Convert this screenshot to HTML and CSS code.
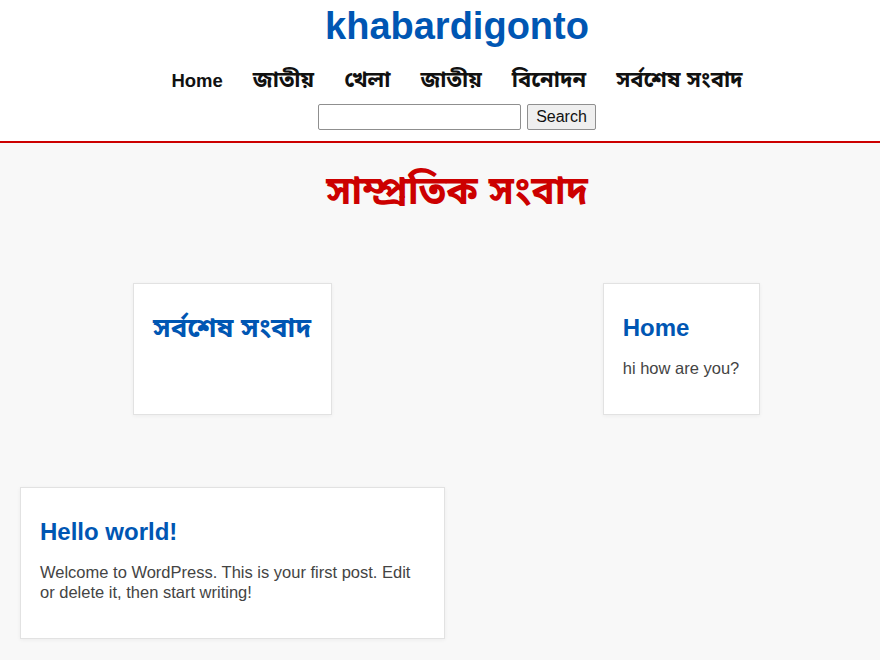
FILE: index.html
```html
<!DOCTYPE html>
<html lang="bn">
<head>
<meta charset="utf-8">
<title>khabardigonto</title>
<link rel="stylesheet" href="styles.css">
</head>
<body>
<div class="site">
  <header class="site-header">
    <h1 class="site-title">khabardigonto</h1>
    <nav class="main-nav">
      <ul class="nav-list">
        <li><a href="#" class="nav-en">Home</a></li>
        <li><a href="#">জাতীয়</a></li>
        <li><a href="#">খেলা</a></li>
        <li><a href="#">জাতীয়</a></li>
        <li><a href="#">বিনোদন</a></li>
        <li><a href="#">সর্বশেষ সংবাদ</a></li>
      </ul>
    </nav>
    <form class="search-form">
      <input type="text" class="search-input">
      <button type="button" class="search-button">Search</button>
    </form>
  </header>
  <main class="content">
    <h2 class="section-title">সাম্প্রতিক সংবাদ</h2>
    <div class="posts">
      <article class="card card-center">
        <h3 class="card-title bn">সর্বশেষ সংবাদ</h3>
      </article>
      <article class="card card-center">
        <h3 class="card-title">Home</h3>
        <p class="card-text">hi how are you?</p>
      </article>
      <article class="card">
        <h3 class="card-title">Hello world!</h3>
        <p class="card-text">Welcome to WordPress. This is your first post. Edit or delete it, then start writing!</p>
      </article>
    </div>
  </main>
</div>
</body>
</html>
```
FILE: styles.css
```css
html {
  overflow: hidden;
}
body {
  margin: 0;
  font-family: "Liberation Sans", Arial, "Noto Sans Bengali", "Lohit Bengali", sans-serif;
  background: #f8f8f8;
}
.site {
  width: 914px;
}
.site-header {
  background: #fff;
  text-align: center;
  padding: 4px 0 11px;
  border-bottom: 2px solid #cc0000;
}
.site-title {
  margin: 0;
  font-size: 38px;
  line-height: 44px;
  color: #0056b3;
  font-weight: bold;
}
.nav-list {
  list-style: none;
  margin: 17px 0 7px;
  padding: 0;
  display: flex;
  justify-content: center;
  align-items: baseline;
}
.nav-list li {
  margin: 0 15px;
  line-height: 30px;
}
.nav-list a {
  color: #111;
  text-decoration: none;
  font-size: 22px;
  font-weight: bold;
}
.nav-list a.nav-en {
  font-size: 18.5px;
}
.search-form {
  display: flex;
  justify-content: center;
  gap: 6px;
}
.search-input {
  width: 203px;
  height: 26px;
  box-sizing: border-box;
  border: 1px solid #8f8f8f;
  border-radius: 2px;
  padding: 3px 4px;
  font-size: 16px;
  background: #fff;
}
.search-button {
  height: 26px;
  box-sizing: border-box;
  border: 1px solid #8f8f8f;
  border-radius: 2px;
  background: #efefef;
  padding: 0 8px;
  font-family: "Liberation Sans", Arial, sans-serif;
  font-size: 16px;
  color: #111;
}
.content {
  padding: 18px 20px 20px;
}
.section-title {
  margin: 0;
  text-align: center;
  font-size: 39px;
  line-height: 60px;
  color: #cc0000;
  font-weight: bold;
}
.posts {
  margin-top: 62px;
  display: grid;
  grid-template-columns: 1fr 1fr;
  column-gap: 24px;
  row-gap: 72px;
}
.card {
  background: #fff;
  border: 1px solid #e2e2e2;
  box-shadow: 0 1px 4px rgba(0, 0, 0, 0.05);
  padding: 20px 20px 20px 19px;
}
.card-center {
  justify-self: center;
}
.card-title {
  margin: 10px 0 16px;
  font-size: 24px;
  color: #0056b3;
  font-weight: bold;
}
.card-title.bn {
  font-size: 27.5px;
  margin-top: 8px;
}
.card-text {
  margin: 16px 0;
  font-size: 16.5px;
  line-height: 20px;
  color: #444;
}
```
